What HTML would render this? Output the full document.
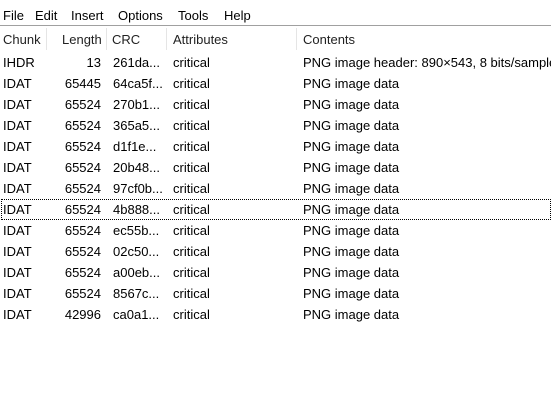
<html><head><style>
body{margin:0;width:551px;height:400px;background:#fff;font-family:"Liberation Sans","Noto Sans CJK SC",sans-serif;font-size:13px;color:#000;overflow:hidden;position:relative}
.menu{position:absolute;top:0;left:0;width:551px;height:25px;border-bottom:1px solid #a0a0a0}
.menu span{position:absolute;top:8px}
.hdr{position:absolute;top:27px;left:0;width:551px;height:24px}
.hdr span,.r span{position:absolute;white-space:nowrap}
.hdr span{top:5px;color:#222}
.sep{position:absolute;top:28px;width:1px;height:22px;background:#e5e5e5}
.r{position:absolute;left:0;width:551px;height:21px}
.r span{top:3px}
.len{text-align:right;width:50px;left:51px}
.foc{border:1px dotted #000;box-sizing:border-box;left:1px;width:550px}
</style></head><body>
<div class="menu"><span style="left:3px">File</span><span style="left:35px">Edit</span><span style="left:71px">Insert</span><span style="left:118px">Options</span><span style="left:178px">Tools</span><span style="left:224px">Help</span></div>
<div class="hdr"><span style="left:3px">Chunk</span><span style="left:62px">Length</span><span style="left:112px">CRC</span><span style="left:173px">Attributes</span><span style="left:303px">Contents</span></div>
<div class="sep" style="left:46px"></div><div class="sep" style="left:106px"></div><div class="sep" style="left:166px"></div><div class="sep" style="left:296px"></div>
<div id="rows"></div>
<div class="r" style="top:52px"><span style="left:3px">IHDR</span><span class="len">13</span><span style="left:113px">261da...</span><span style="left:173px">critical</span><span style="left:303px">PNG image header: 890×543, 8 bits/sample</span></div>
<div class="r" style="top:73px"><span style="left:3px">IDAT</span><span class="len">65445</span><span style="left:113px">64ca5f...</span><span style="left:173px">critical</span><span style="left:303px">PNG image data</span></div>
<div class="r" style="top:94px"><span style="left:3px">IDAT</span><span class="len">65524</span><span style="left:113px">270b1...</span><span style="left:173px">critical</span><span style="left:303px">PNG image data</span></div>
<div class="r" style="top:115px"><span style="left:3px">IDAT</span><span class="len">65524</span><span style="left:113px">365a5...</span><span style="left:173px">critical</span><span style="left:303px">PNG image data</span></div>
<div class="r" style="top:136px"><span style="left:3px">IDAT</span><span class="len">65524</span><span style="left:113px">d1f1e...</span><span style="left:173px">critical</span><span style="left:303px">PNG image data</span></div>
<div class="r" style="top:157px"><span style="left:3px">IDAT</span><span class="len">65524</span><span style="left:113px">20b48...</span><span style="left:173px">critical</span><span style="left:303px">PNG image data</span></div>
<div class="r" style="top:178px"><span style="left:3px">IDAT</span><span class="len">65524</span><span style="left:113px">97cf0b...</span><span style="left:173px">critical</span><span style="left:303px">PNG image data</span></div>
<div class="r foc" style="top:199px"></div>
<div class="r" style="top:199px"><span style="left:3px">IDAT</span><span class="len">65524</span><span style="left:113px">4b888...</span><span style="left:173px">critical</span><span style="left:303px">PNG image data</span></div>
<div class="r" style="top:220px"><span style="left:3px">IDAT</span><span class="len">65524</span><span style="left:113px">ec55b...</span><span style="left:173px">critical</span><span style="left:303px">PNG image data</span></div>
<div class="r" style="top:241px"><span style="left:3px">IDAT</span><span class="len">65524</span><span style="left:113px">02c50...</span><span style="left:173px">critical</span><span style="left:303px">PNG image data</span></div>
<div class="r" style="top:262px"><span style="left:3px">IDAT</span><span class="len">65524</span><span style="left:113px">a00eb...</span><span style="left:173px">critical</span><span style="left:303px">PNG image data</span></div>
<div class="r" style="top:283px"><span style="left:3px">IDAT</span><span class="len">65524</span><span style="left:113px">8567c...</span><span style="left:173px">critical</span><span style="left:303px">PNG image data</span></div>
<div class="r" style="top:304px"><span style="left:3px">IDAT</span><span class="len">42996</span><span style="left:113px">ca0a1...</span><span style="left:173px">critical</span><span style="left:303px">PNG image data</span></div>
</body></html>
